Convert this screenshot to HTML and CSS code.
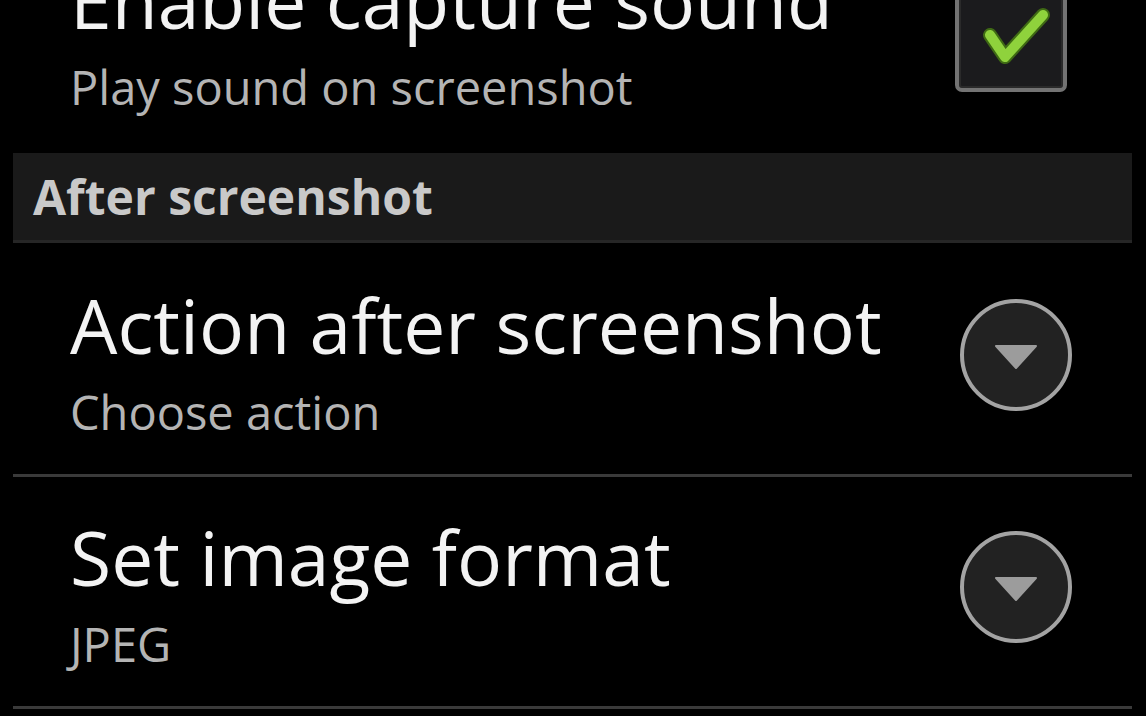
FILE: index.html
```html
<!DOCTYPE html>
<html lang="en">
<head>
<meta charset="utf-8">
<title>Screenshot settings</title>
<link rel="stylesheet" href="styles.css">
</head>
<body>
<div class="prefs">
  <div class="row row-first">
    <div class="texts">
      <div class="title">Enable capture sound</div>
      <div class="summary">Play sound on screenshot</div>
    </div>
    <div class="control">
      <div class="checkbox">
        <svg width="104" height="104" viewBox="0 0 104 104">
          <polyline points="31,51 46,73 84,31" fill="none" stroke="#3f6a14" stroke-width="14" stroke-linecap="round" stroke-linejoin="round"/>
          <polyline points="31,51 46,73 84,31" fill="none" stroke="#8fd23c" stroke-width="10" stroke-linecap="round" stroke-linejoin="round"/>
        </svg>
      </div>
    </div>
  </div>
  <div class="category">After screenshot</div>
  <div class="row row-mid">
    <div class="texts">
      <div class="title">Action after screenshot</div>
      <div class="summary">Choose action</div>
    </div>
    <div class="control">
      <div class="dropdown">
        <svg width="104" height="104" viewBox="0 0 104 104">
          <polygon points="32,43 72,43 52,65" fill="#9c9c9c" stroke="#9c9c9c" stroke-width="2" stroke-linejoin="round"/>
        </svg>
      </div>
    </div>
  </div>
  <div class="row row-last">
    <div class="texts">
      <div class="title">Set image format</div>
      <div class="summary">JPEG</div>
    </div>
    <div class="control">
      <div class="dropdown">
        <svg width="104" height="104" viewBox="0 0 104 104">
          <polygon points="32,43 72,43 52,65" fill="#9c9c9c" stroke="#9c9c9c" stroke-width="2" stroke-linejoin="round"/>
        </svg>
      </div>
    </div>
  </div>
</div>
</body>
</html>
```

FILE: styles.css
```css
html, body {
  margin: 0;
  padding: 0;
  background: #000;
  overflow: hidden;
}

body {
  font-family: "Open Sans", "Noto Sans", "DejaVu Sans", sans-serif;
  color: #f2f2f2;
}

.prefs {
  margin: 0 14px 0 13px;
  display: flex;
  flex-direction: column;
}

.row {
  height: 232px;
  box-sizing: border-box;
  display: flex;
  justify-content: space-between;
  align-items: flex-start;
  border-bottom: 3px solid #3a3a3a;
  padding-left: 57px;
  padding-right: 60px;
}

.row-first {
  margin-top: -82px;
  height: 235px;
  border-bottom: none;
}

.row-mid {
  height: 234px;
}

.row-last {
  height: 232px;
}

.row-last .texts {
  padding-top: 35px;
}

.row-last .dropdown {
  margin-top: 54px;
}

.texts {
  display: flex;
  flex-direction: column;
  padding-top: 37px;
}

.title {
  font-size: 75px;
  line-height: 90px;
  color: #f3f3f3;
  white-space: nowrap;
}

.summary {
  font-size: 47px;
  line-height: 60px;
  margin-top: 12px;
  color: #b4b4b4;
  white-space: nowrap;
}

.control {
  display: flex;
  align-items: flex-start;
}

.checkbox {
  margin-top: 62px;
  margin-right: 5px;
  width: 112px;
  height: 112px;
  box-sizing: border-box;
  border: 4px solid #737373;
  border-radius: 7px;
  background: #1b1b1d;
  box-shadow: inset 0 0 0 2px #2a2a2a;
}

.checkbox svg {
  display: block;
}

.dropdown {
  margin-top: 56px;
  width: 112px;
  height: 112px;
  box-sizing: border-box;
  border: 4px solid #a3a3a3;
  border-radius: 50%;
  background: #222;
}

.dropdown svg {
  display: block;
}

.category {
  height: 90px;
  box-sizing: border-box;
  background: #1a1a1a;
  border-bottom: 3px solid #262626;
  padding-left: 20px;
  font-size: 48px;
  font-weight: 700;
  line-height: 87px;
  color: #c9c9c9;
  white-space: nowrap;
}
```
